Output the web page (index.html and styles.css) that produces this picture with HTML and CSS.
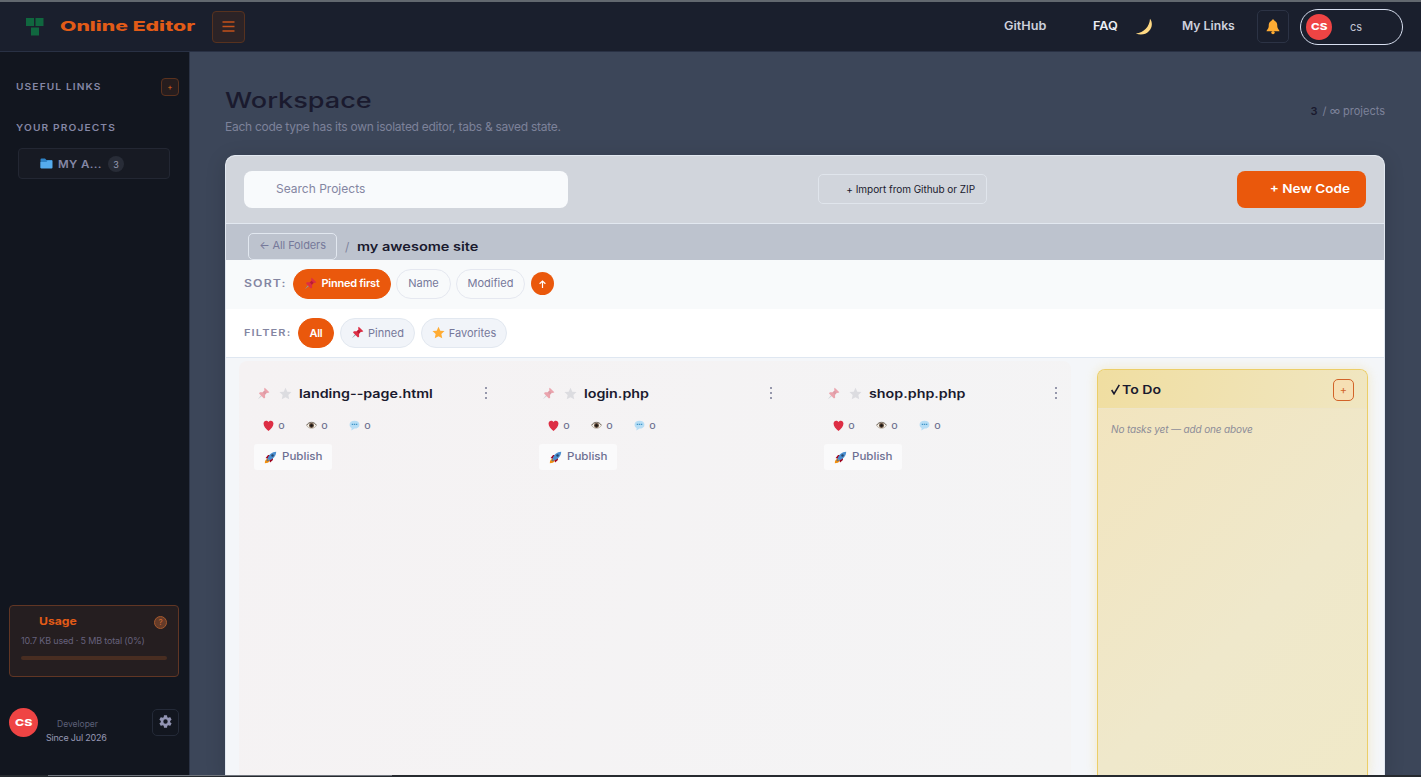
FILE: index.html
```html
<!DOCTYPE html>
<html lang="en">
<head>
    <meta charset="UTF-8">
    <meta name="viewport" content="width=device-width, initial-scale=1.0">
    <title>Online Editor</title>
    <link rel="stylesheet" href="styles.css">
</head>
<body>
    <!-- Shared icons -->
    <svg class="icon-defs" width="0" height="0">
        <symbol id="pin" viewBox="0 0 16 16">
            <path d="M1 15l5-6 1.300 1.200z" fill="#8a99a6"/>
            <path d="M9.500 .8l5.700 5.600-1.800 1-1.300-.2-2.200 2.400.1 3.500-1.400 1L2.500 8.100l1-1.500 3.500 0L9.200 4.300 8.800 2.300z" fill="#dd2e44"/>
            <path d="M9.300 4.500l2.600 2.600-2.200 2.400-2.500-2.700z" fill="#b91c35"/>
        </symbol>
        <symbol id="star" viewBox="0 0 16 16">
            <path d="M8 .8l2.200 4.900 5.200.6-3.900 3.600 1.100 5.300L8 12.600l-4.600 2.600 1.100-5.300L.6 6.300l5.200-.6z"/>
        </symbol>
        <symbol id="heart" viewBox="0 0 16 16">
            <path d="M8 16C4 13 .8 9 .8 5.200.8 .5 6-.3 8 3c2-3.300 7.200-2.500 7.200 2.200C15.200 9 12 13 8 16z" fill="#dd2e44"/>
        </symbol>
        <symbol id="eye" viewBox="0 0 16 16">
            <path d="M1 8c3-5.500 11-5.500 14 0-3 5.500-11 5.500-14 0z" fill="#f3efe6" stroke="#a89d90" stroke-width="1"/>
            <circle cx="8" cy="8" r="3.600" fill="#5d4432"/>
            <circle cx="8" cy="8" r="1.800" fill="#141414"/>
            <path d="M1 7.500C4 2 12 2 15 7.500" fill="none" stroke="#6c6258" stroke-width="1.300"/>
        </symbol>
        <symbol id="bubble" viewBox="0 0 16 16">
            <path d="M8 1c4.200 0 7.200 2.300 7.200 5.800s-3 5.700-7.200 5.700L3.500 15.200l.3-3.600C2 10.600.8 9 .8 6.800.8 3.300 3.800 1 8 1z" fill="#b6ddf5"/>
            <path d="M4 6.500h2M7 6.500h2M10 6.500h2" stroke="#4396c8" stroke-width="1.800"/>
        </symbol>
        <symbol id="rocket" viewBox="0 0 16 16">
            <path d="M1 15c0-3 1-5 3.500-5.500L6.800 12C6 14.500 4 15 1 15z" fill="#f4900c"/>
            <path d="M2 8.500l3-3.500h4L4.500 9.500zM7.500 14l3.500-3V7L6.500 11.500z" fill="#a0041e"/>
            <path d="M15 1c-5 0-9.500 4-10.500 8.500l2 2C11 10.500 15 6 15 1z" fill="#4b8fd0"/>
            <path d="M4.500 9.500l2 2-2.500 1.500-1-1z" fill="#66757f"/>
            <circle cx="10.500" cy="5.500" r="1.500" fill="#24476c"/>
        </symbol>
    </svg>

    <header class="topbar">
        <svg class="logo" viewBox="0 0 18 18" fill="#10673f">
            <rect x="0" y="0" width="8" height="8"/>
            <rect x="9.500" y="0" width="8" height="8"/>
            <rect x="5" y="9.500" width="8" height="8"/>
        </svg>
        <div class="brand"><span class="wide">Online Editor</span></div>
        <button class="menu-btn">
            <svg width="13" height="11" viewBox="0 0 13 11" stroke="#c2511b" stroke-width="1.400"><path d="M.5 1h12M.5 5.500h12M.5 10h12"/></svg>
        </button>
        <nav class="nav">
            <a class="nav-github"><span class="wide">GitHub</span></a>
            <a class="nav-faq"><span class="wide">FAQ</span></a>
            <svg class="moon" viewBox="0 0 18 18"><path d="M15 .8C20.500 8 13 19.800.8 15.600 9 14.500 14.500 9 15 .8z" fill="#ffd983"/></svg>
            <a class="nav-links"><span class="wide">My Links</span></a>
        </nav>
        <button class="bell-btn">
            <svg width="14" height="16" viewBox="0 0 14 16"><path d="M7 .5c1 0 1.400.6 1.400 1.300C11 2.600 11.300 5 11.300 7.500c0 2.500 2.200 3.200 2.200 4.800H.5c0-1.600 2.200-2.300 2.200-4.800 0-2.500.3-4.900 2.900-5.700C5.600 1.100 6 .5 7 .5z" fill="#ffac33"/><circle cx="7" cy="13.600" r="1.700" fill="#ffac33"/></svg>
        </button>
        <div class="user-pill">
            <span class="avatar small"><span>CS</span></span>
            <span class="user-name">cs</span>
        </div>
    </header>

    <div class="layout">
        <aside class="sidebar">
            <div class="side-head">
                <span class="side-title wide">USEFUL LINKS</span>
                <button class="side-add">+</button>
            </div>
            <div class="side-head second">
                <span class="side-title wide">YOUR PROJECTS</span>
            </div>
            <div class="folder">
                <svg width="13" height="11" viewBox="0 0 13 11"><path d="M.5 1.500Q.5.500 1.500.500H5l1.500 1.500h5.500V10H.5z" fill="#2f83c7"/><path d="M.5 4h6l1-1.500h5V9.500q0 1-1 1h-10q-1 0-1-1z" fill="#55acee"/></svg>
                <span class="folder-name"><span class="wide">MY A...</span></span>
                <span class="folder-count">3</span>
            </div>

            <div class="usage">
                <div class="usage-head">
                    <span class="usage-title wide">Usage</span>
                    <span class="usage-help">?</span>
                </div>
                <div class="usage-text">10.7 KB used · 5 MB total (0%)</div>
                <div class="usage-bar"></div>
            </div>

            <div class="profile">
                <span class="avatar"><span>CS</span></span>
                <div class="profile-info">
                    <div class="role">Developer</div>
                    <div class="since">Since Jul 2026</div>
                </div>
                <button class="gear-btn">
                    <svg width="15" height="15" viewBox="0 0 24 24" fill="#9294b3"><path d="M19.400 13c.04-.3.070-.650.070-1s-.03-.7-.07-1l2.100-1.650c.2-.15.250-.42.120-.64l-2-3.460c-.12-.22-.38-.3-.6-.22l-2.500 1c-.52-.4-1.080-.73-1.690-.98l-.38-2.650A.49.490 0 0 0 14 2h-4c-.25 0-.46.180-.49.420l-.38 2.650c-.61.250-1.170.590-1.690.980l-2.500-1c-.23-.09-.48 0-.6.220l-2 3.460c-.13.220-.07.490.120.640L4.570 11c-.04.300-.07.660-.07 1s.03.700.070 1l-2.100 1.650c-.2.150-.25.420-.12.640l2 3.460c.12.220.38.300.6.220l2.500-1c.52.400 1.080.730 1.690.980l.38 2.650c.03.240.24.420.49.420h4c.25 0 .46-.18.490-.42l.38-2.650c.61-.25 1.170-.59 1.690-.98l2.500 1c.23.090.48 0 .6-.22l2-3.460c.12-.22.070-.49-.12-.64zM12 15.500a3.500 3.500 0 1 1 0-7 3.500 3.500 0 0 1 0 7z"/></svg>
                </button>
            </div>
        </aside>

        <main class="main">
            <div class="page-head">
                <div>
                    <h1><span class="wide">Workspace</span></h1>
                    <p class="subtitle">Each code type has its own isolated editor, tabs &amp; saved state.</p>
                </div>
                <div class="project-count"><b>3</b> / ∞ projects</div>
            </div>

            <section class="panel">
                <div class="toolbar">
                    <input class="search" type="text" placeholder="Search Projects">
                    <button class="import-btn">+ Import from Github or ZIP</button>
                    <button class="new-btn"><span class="wide">+ New Code</span></button>
                </div>
                <div class="crumbs">
                    <button class="back-btn">← All Folders</button>
                    <span class="slash">/</span>
                    <span class="crumb-name"><span class="wide">my awesome site</span></span>
                </div>
                <div class="row sort-row">
                    <span class="row-label sort-label"><span class="wide">SORT:</span></span>
                    <button class="chip sort-pinned active"><svg class="ic13"><use href="#pin"/></svg>Pinned first</button>
                    <button class="chip sort-name">Name</button>
                    <button class="chip sort-mod">Modified</button>
                    <button class="dir-btn"><svg width="7" height="8" viewBox="0 0 7 8" fill="none" stroke="#fff" stroke-width="1.200"><path d="M3.500 8V1M.6 3.800L3.500 1l2.900 2.800"/></svg></button>
                </div>
                <div class="row filter-row">
                    <span class="row-label filter-label"><span class="wide">FILTER:</span></span>
                    <button class="chip filter-all active">All</button>
                    <button class="chip filter-pinned tinted"><svg class="ic13"><use href="#pin"/></svg>Pinned</button>
                    <button class="chip filter-fav tinted"><svg class="ic13 gold"><use href="#star"/></svg>Favorites</button>
                </div>

                <div class="content">
                    <div class="projects">
                        <article class="project">
                            <div class="project-head">
                                <svg class="ic13 faded"><use href="#pin"/></svg>
                                <svg class="ic13 grey-star"><use href="#star"/></svg>
                                <span class="project-name"><span class="wide">landing--page.html</span></span>
                                <span class="dots"><i></i><i></i><i></i></span>
                            </div>
                            <div class="stats">
                                <span><svg><use href="#heart"/></svg><b>0</b></span>
                                <span><svg><use href="#eye"/></svg><b>0</b></span>
                                <span><svg><use href="#bubble"/></svg><b>0</b></span>
                            </div>
                            <button class="publish"><svg class="ic13"><use href="#rocket"/></svg><span class="wide">Publish</span></button>
                        </article>
                        <article class="project">
                            <div class="project-head">
                                <svg class="ic13 faded"><use href="#pin"/></svg>
                                <svg class="ic13 grey-star"><use href="#star"/></svg>
                                <span class="project-name"><span class="wide">login.php</span></span>
                                <span class="dots"><i></i><i></i><i></i></span>
                            </div>
                            <div class="stats">
                                <span><svg><use href="#heart"/></svg><b>0</b></span>
                                <span><svg><use href="#eye"/></svg><b>0</b></span>
                                <span><svg><use href="#bubble"/></svg><b>0</b></span>
                            </div>
                            <button class="publish"><svg class="ic13"><use href="#rocket"/></svg><span class="wide">Publish</span></button>
                        </article>
                        <article class="project">
                            <div class="project-head">
                                <svg class="ic13 faded"><use href="#pin"/></svg>
                                <svg class="ic13 grey-star"><use href="#star"/></svg>
                                <span class="project-name"><span class="wide">shop.php.php</span></span>
                                <span class="dots"><i></i><i></i><i></i></span>
                            </div>
                            <div class="stats">
                                <span><svg><use href="#heart"/></svg><b>0</b></span>
                                <span><svg><use href="#eye"/></svg><b>0</b></span>
                                <span><svg><use href="#bubble"/></svg><b>0</b></span>
                            </div>
                            <button class="publish"><svg class="ic13"><use href="#rocket"/></svg><span class="wide">Publish</span></button>
                        </article>
                    </div>

                    <aside class="todo">
                        <div class="todo-head">
                            <span class="todo-title"><svg width="9" height="11" viewBox="0 0 9 11" fill="none" stroke="#1a1a2e" stroke-width="1.600"><path d="M.6 6l2.400 3.800L8.300.8"/></svg><span class="wide">To Do</span></span>
                            <button class="todo-add">+</button>
                        </div>
                        <p class="todo-empty">No tasks yet — add one above</p>
                    </aside>
                </div>
            </section>
        </main>
    </div>
    <footer class="edge"><span></span></footer>
</body>
</html>
```
FILE: styles.css
```css
* {
    box-sizing: border-box;
}
body {
    margin: 0;
    height: 777px;
    overflow: hidden;
    display: flex;
    flex-direction: column;
    border-top: 2px solid #62686f;
    background: #3c4659;
    font-family: Inter, "Liberation Sans", sans-serif;
    color: #1a1a2e;
}
button {
    font-family: inherit;
    padding: 0;
    border: none;
    background: none;
    cursor: pointer;
    white-space: nowrap;
}
svg {
    display: block;
    flex: none;
}
.icon-defs {
    position: absolute;
}
/* Extended look for headings and labels */
.wide {
    display: inline-block;
    transform-origin: 0 50%;
    white-space: nowrap;
}
.ic13 {
    width: 13px;
    height: 13px;
}

/* Top bar */
.topbar {
    height: 50px;
    flex: none;
    display: flex;
    align-items: center;
    padding: 0 18px 0 26px;
    background: #1a1f2d;
    border-bottom: 1px solid #293144;
}
.logo {
    width: 18px;
    height: 18px;
}
.brand {
    width: 152px;
    margin-left: 16px;
    padding-bottom: 2px;
    font-size: 13.500px;
    font-weight: 800;
    color: #e25b17;
    line-height: 20px;
}
.brand .wide {
    transform: scaleX(1.57);
}
.menu-btn {
    width: 33px;
    height: 32px;
    border: 1px solid #57321f;
    border-radius: 4px;
    background: #2c2326;
    display: flex;
    align-items: center;
    justify-content: center;
}
.nav {
    margin-left: auto;
    display: flex;
    align-items: center;
    font-size: 11.500px;
    font-weight: 600;
    color: #cdd0dc;
}
.nav a {
    padding-bottom: 1px;
    white-space: nowrap;
}
.nav .wide {
    transform: scaleX(1.1);
}
.nav-github {
    width: 89px;
}
.nav-faq {
    width: 42px;
    color: #eceef4;
}
.moon {
    width: 18px;
    height: 18px;
}
.nav .nav-links {
    width: 75px;
    margin-left: 29px;
}
.nav-links .wide {
    transform: scaleX(1.06);
}
.bell-btn {
    width: 32px;
    height: 33px;
    border: 1px solid #2c3345;
    border-radius: 5px;
    display: flex;
    align-items: center;
    justify-content: center;
}
.user-pill {
    width: 103px;
    height: 36px;
    margin-left: 11px;
    padding-left: 5px;
    border: 1px solid #d8dff0;
    border-radius: 18px;
    display: flex;
    align-items: center;
}
.user-name {
    margin-left: 18px;
    font-size: 11px;
    color: #c3c6d4;
}
.avatar {
    width: 29px;
    height: 29px;
    flex: none;
    border-radius: 50%;
    background: #ef4444;
    color: #fff;
    font-size: 9.500px;
    font-weight: 800;
    display: flex;
    align-items: center;
    justify-content: center;
}
.avatar span {
    transform: scaleX(1.3);
}
.avatar.small {
    width: 26px;
    height: 26px;
    font-size: 9px;
    padding-bottom: 1px;
}

/* Sidebar */
.layout {
    flex: 1;
    min-height: 0;
    display: flex;
}
.sidebar {
    width: 190px;
    flex: none;
    display: flex;
    flex-direction: column;
    padding: 26px 10px 0 9px;
    background: #12161f;
    border-right: 1px solid #2b3345;
}
.side-head {
    height: 18px;
    display: flex;
    align-items: center;
    justify-content: space-between;
    padding-left: 7px;
}
.side-head.second {
    margin-top: 23px;
}
.side-title {
    padding-bottom: 2px;
    font-size: 9px;
    font-weight: 600;
    letter-spacing: 1px;
    color: #8587a5;
    transform: scaleX(1.13);
}
.side-add {
    width: 18px;
    height: 18px;
    border: 1px solid #5b321e;
    border-radius: 4px;
    background: #261d1e;
    color: #e2691c;
    font-size: 8px;
    line-height: 14px;
}
.folder {
    width: 152px;
    height: 31px;
    margin: 11px 0 0 9px;
    padding-left: 21px;
    display: flex;
    align-items: center;
    border: 1px solid #232733;
    border-radius: 4px;
    background: #171a23;
}
.folder-name {
    width: 55px;
    padding-left: 5px;
    font-size: 10px;
    font-weight: 600;
    letter-spacing: .3px;
    color: #8587a5;
}
.folder-name .wide {
    transform: scaleX(1.16);
}
.folder-count {
    width: 16px;
    height: 16px;
    border-radius: 8px;
    background: #282c37;
    color: #9a9cb5;
    font-size: 9px;
    line-height: 17px;
    text-align: center;
}
.usage {
    height: 72px;
    margin-top: auto;
    padding: 7px 11px 0;
    border: 1px solid #613624;
    border-radius: 4px;
    background: #251e20;
}
.usage-head {
    display: flex;
    align-items: center;
    justify-content: space-between;
    padding-left: 18px;
    height: 19px;
}
.usage-title {
    padding-bottom: 2px;
    font-size: 10.500px;
    font-weight: 700;
    color: #e25b17;
    transform: scaleX(1.16);
}
.usage-help {
    width: 13px;
    height: 13px;
    border: 1px solid #a5592d;
    border-radius: 50%;
    background: #643b29;
    color: #cf6930;
    font-size: 8px;
    line-height: 11px;
    text-align: center;
}
.usage-text {
    margin-top: 2px;
    font-size: 9px;
    line-height: 13px;
    letter-spacing: -.17px;
    color: #66617c;
    white-space: nowrap;
}
.usage-bar {
    height: 4px;
    margin-top: 9px;
    border-radius: 2px;
    background: #482d21;
}
.profile {
    height: 98px;
    flex: none;
    padding-top: 31px;
    display: flex;
    align-items: flex-start;
}
.profile-info {
    margin: 9px auto 0 8px;
    font-size: 9px;
    line-height: 14px;
    white-space: nowrap;
}
.role {
    padding-left: 11px;
    color: #5d6078;
    font-size: 8.500px;
}
.since {
    letter-spacing: -.22px;
    color: #9698b4;
}
.gear-btn {
    width: 27px;
    height: 27px;
    margin-top: 1px;
    border: 1px solid #242a38;
    border-radius: 5px;
    display: flex;
    align-items: center;
    justify-content: center;
    padding-bottom: 2px;
}

/* Workspace */
.main {
    flex: 1;
    padding: 35px 36px 0 35px;
    display: flex;
    flex-direction: column;
}
.page-head {
    height: 68px;
    flex: none;
    display: flex;
    justify-content: space-between;
}
h1 {
    margin: 0;
    font-size: 21px;
    line-height: 27px;
    font-weight: 500;
}
h1 .wide {
    transform: scaleX(1.29);
}
.subtitle {
    margin: 5px 0 0;
    font-size: 12px;
    line-height: 16px;
    letter-spacing: -.27px;
    color: #7d829a;
    white-space: nowrap;
}
.project-count {
    margin-top: 16px;
    font-size: 11px;
    line-height: 16px;
    color: #7d829a;
}
.project-count b {
    color: #1a1a2e;
    font-size: 11px;
    font-weight: 600;
    margin-right: 2px;
}
.panel {
    flex: 1;
    min-height: 0;
    display: flex;
    flex-direction: column;
    border: 1px solid #e2e8f0;
    border-bottom: none;
    border-radius: 10px 10px 0 0;
    background: #f4f6f9;
    overflow: hidden;
    box-shadow: 0 4px 20px rgba(0, 0, 0, .15);
}
.toolbar {
    height: 68px;
    flex: none;
    padding: 0 18px;
    display: flex;
    align-items: center;
    background: #d1d5dc;
    border-bottom: 1px solid #e2e8f0;
}
.search {
    width: 324px;
    height: 37px;
    padding: 0 0 2px 32px;
    border: none;
    border-radius: 8px;
    background: #f8fafc;
    font-family: inherit;
    font-size: 12px;
}
.search::placeholder {
    color: #8486a2;
}
.import-btn {
    width: 169px;
    height: 30px;
    margin: 0 0 1px 250px;
    padding-right: 11px;
    text-align: right;
    border: 1px solid #e0e5ec;
    border-radius: 5px;
    font-size: 10px;
    letter-spacing: -.04px;
    color: #1a1a2e;
}
.new-btn {
    width: 129px;
    height: 37px;
    margin-left: auto;
    padding: 0 16px 2px 0;
    text-align: right;
    border-radius: 8px;
    background: #ea580c;
    color: #fff;
    font-size: 12px;
    font-weight: 600;
}
.new-btn .wide {
    transform: scaleX(1.13);
    transform-origin: 100% 50%;
}
.crumbs {
    height: 36px;
    flex: none;
    padding: 9px 22px 0;
    display: flex;
    background: #bdc3ce;
}
.back-btn {
    width: 89px;
    height: 27px;
    padding-bottom: 3px;
    border: 1px solid #e2e8f0;
    border-radius: 5px;
    font-size: 11px;
    letter-spacing: -.1px;
    color: #76799a;
}
.slash {
    margin-left: 8px;
    width: 12px;
    font-size: 12px;
    line-height: 27px;
    color: #7f839d;
}
.crumb-name {
    font-size: 12px;
    font-weight: 600;
    line-height: 27px;
}
.crumb-name .wide {
    transform: scaleX(1.21);
}
.row {
    flex: none;
    display: flex;
    align-items: center;
    padding-left: 18px;
}
.sort-row {
    height: 49px;
    padding-bottom: 2px;
    background: #f8fafb;
}
.filter-row {
    height: 49px;
    background: #fff;
    border-bottom: 1px solid #dfe7f1;
}
.row-label {
    padding-bottom: 2px;
    font-weight: 600;
    letter-spacing: .9px;
    color: #8486a2;
    white-space: nowrap;
}
.sort-label {
    width: 49px;
    font-size: 10px;
}
.filter-label {
    width: 54px;
    font-size: 9px;
}
.row-label .wide {
    transform: scaleX(1.23);
}
.chip {
    height: 30px;
    margin-right: 6px;
    padding-bottom: 1px;
    border: 1px solid #e5e8f0;
    border-radius: 15px;
    font-size: 11px;
    color: #76789a;
    display: flex;
    align-items: center;
    justify-content: center;
    gap: 4px;
}
.chip.tinted {
    background: #f1f4f9;
    border-color: #e2e8f0;
}
.chip.active {
    background: #ea580c;
    border-color: #ea580c;
    color: #fff;
    font-weight: 600;
    letter-spacing: -.25px;
}
.chip.sort-pinned {
    width: 98px;
    margin-right: 5px;
}
.chip.sort-name {
    width: 55px;
    margin-right: 5px;
}
.sort-mod {
    width: 69px;
}
.filter-all {
    width: 36px;
}
.filter-pinned {
    width: 75px;
}
.filter-fav {
    width: 86px;
}
.gold {
    fill: #ffac33;
}
.dir-btn {
    width: 23px;
    height: 23px;
    border-radius: 50%;
    background: #ea580c;
    display: flex;
    align-items: center;
    justify-content: center;
}
.content {
    flex: 1;
    min-height: 0;
    display: flex;
    padding: 3px 16px 0 13px;
}
.projects {
    width: 832px;
    display: grid;
    grid-template-columns: 285px 285px 262px;
    align-items: start;
    border-radius: 8px 8px 0 0;
    background: linear-gradient(110deg, #f5f2f3, #f4f4f5);
}
.project {
    padding: 23px 0 0 15px;
}
.project-head {
    display: flex;
    align-items: center;
    height: 18px;
    padding-left: 3px;
}
.faded {
    opacity: .4;
}
.grey-star {
    margin: 0 7px 0 9px;
    fill: #dcdce0;
}
.project-name {
    width: 182px;
    font-size: 12px;
    font-weight: 600;
    white-space: nowrap;
}
.project-name .wide {
    transform: scaleX(1.19);
}
.dots {
    display: flex;
    flex-direction: column;
    gap: 3px;
    margin-left: 4px;
}
.dots i {
    width: 2px;
    height: 2px;
    background: #9698ac;
}
.stats {
    display: flex;
    padding-left: 9px;
    margin-top: 16px;
    height: 15px;
    color: #6d6f8f;
}
.stats span {
    width: 43px;
    display: flex;
    align-items: center;
    gap: 5px;
}
.stats b {
    font-size: 8px;
    font-weight: 500;
    transform: scaleX(1.25);
}
.stats svg {
    width: 11px;
    height: 11px;
}
.publish {
    width: 78px;
    height: 26px;
    margin-top: 11px;
    padding-left: 10px;
    display: flex;
    align-items: center;
    gap: 5px;
    border-radius: 3px;
    background: #fafafb;
    font-size: 10.500px;
    font-weight: 500;
    color: #6d6f92;
}
.publish .wide {
    padding-bottom: 1px;
    transform: scaleX(1.1);
}

/* To do list */
.todo {
    width: 271px;
    margin: 8px 0 0 26px;
    border: 1.500px solid #ecce68;
    border-bottom: none;
    border-radius: 8px 8px 0 0;
    background: linear-gradient(135deg, #f2e4bd, #efe8cb 60%, #f0e9c8);
    box-shadow: 0 0 12px rgba(240, 215, 130, .4);
}
.todo-head {
    height: 39px;
    padding: 0 13px;
    display: flex;
    align-items: center;
    justify-content: space-between;
    border-radius: 7px 7px 0 0;
    background: linear-gradient(100deg, #f0dea1, #f0e6c1);
    border-bottom: 1px solid #eee5c8;
    font-size: 12px;
    font-weight: 600;
}
.todo-title {
    display: flex;
    align-items: center;
    gap: 2px;
}
.todo-title .wide {
    transform: scaleX(1.17);
}
.todo-add {
    width: 21px;
    height: 22px;
    margin-top: 1px;
    border: 1px solid #d26328;
    border-radius: 5px;
    background: #f6dfb4;
    color: #d26328;
    font-size: 11px;
}
.todo-empty {
    margin: 12px 13px;
    font-size: 10px;
    line-height: 16px;
    letter-spacing: -.14px;
    font-style: italic;
    color: #8c8c98;
}

/* Bottom edge */
.edge {
    height: 2px;
    flex: none;
    padding-left: 48px;
    background: #262a2f;
}
.edge span {
    display: block;
    width: 344px;
    height: 1px;
    background: #70757d;
}
```
